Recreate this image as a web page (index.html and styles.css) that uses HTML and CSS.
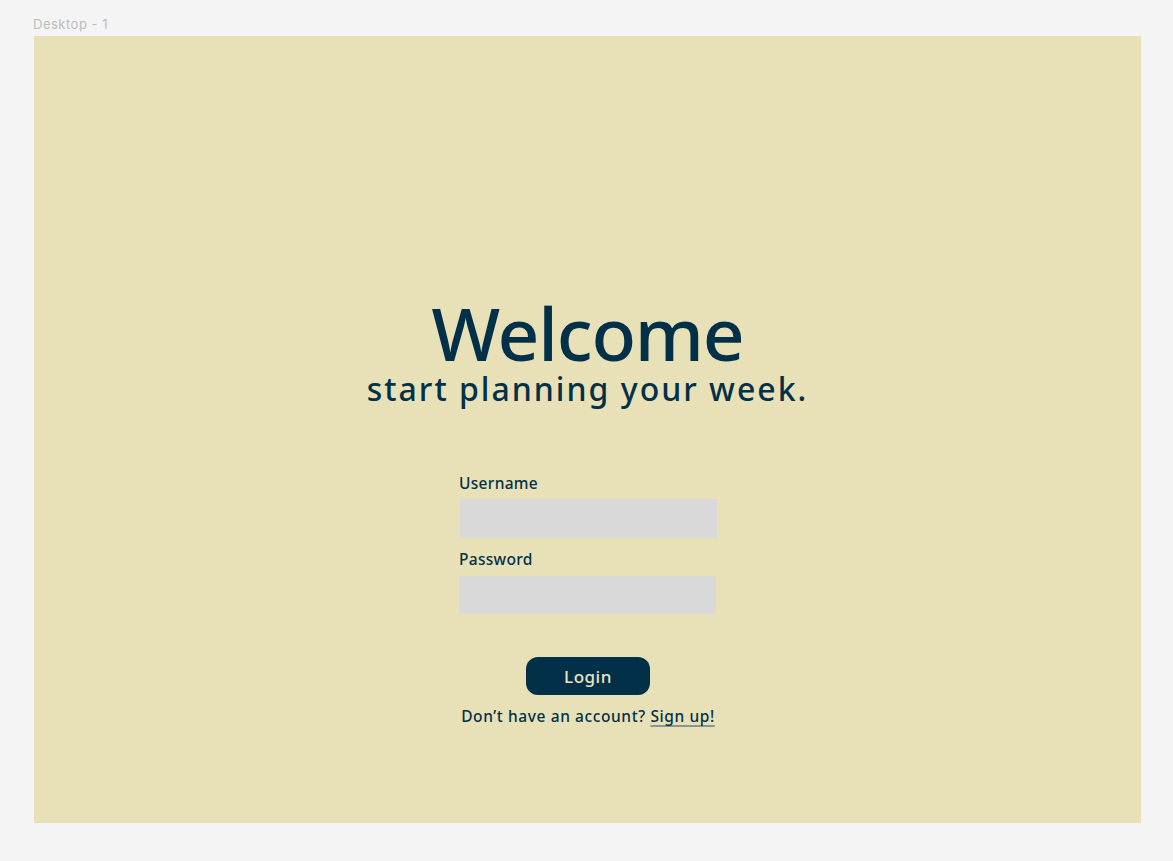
FILE: index.html
```html
<!DOCTYPE html>
<html>
<head>
<meta charset="utf-8">
<link rel="stylesheet" href="styles.css">
</head>
<body>
<div class="canvas">
  <div class="frame-label">Desktop - 1</div>
  <main class="frame">
    <div class="hero">
      <h1 class="title">Welcome</h1>
      <p class="subtitle">start planning your week.</p>
    </div>
    <form class="form">
      <label class="label">Username</label>
      <div class="input"></div>
      <label class="label label-2">Password</label>
      <div class="input input-2"></div>
      <button type="button" class="btn">Login</button>
      <p class="signup">Don’t have an account? <a class="link">Sign up!</a></p>
    </form>
  </main>
</div>
</body>
</html>
```
FILE: styles.css
```css
html, body { margin: 0; padding: 0; }
body {
  background: #f4f4f4;
  font-family: "Noto Sans", "Open Sans", sans-serif;
}
.canvas {
  padding: 15px 32px 38px 34px;
  display: flex;
  flex-direction: column;
}
.frame-label {
  font-family: "Inter", sans-serif;
  font-size: 13px;
  color: #bdbdbd;
  line-height: 18px;
  letter-spacing: 0.5px;
  margin-left: -1px;
  height: 21px;
}
.frame {
  width: 1107px;
  height: 787px;
  background: #e8e1b8;
  display: flex;
  flex-direction: column;
  align-items: center;
  color: #033049;
  box-sizing: border-box;
  padding-top: 258px;
}
.hero {
  display: flex;
  flex-direction: column;
  align-items: center;
}
.title {
  margin: 0;
  font-size: 73px;
  font-weight: 500;
  line-height: 78px;
  letter-spacing: -1.2px;
}
.subtitle {
  margin: 0;
  font-size: 32px;
  font-weight: 500;
  line-height: 34px;
  letter-spacing: 2px;
}
.form {
  margin-top: 67px;
  width: 258px;
  display: flex;
  flex-direction: column;
  margin-left: 1px;
}
.label {
  font-size: 15.5px;
  font-weight: 500;
  line-height: 20px;
  letter-spacing: 0.3px;
}
.label-2 { margin-top: 11px; }
.input {
  height: 39px;
  width: 257px;
  margin-top: 6px;
  margin-left: 1px;
  background: #d9d9d9;
}
.input-2 { margin-left: 0; height: 38px; margin-top: 7px; }
.btn {
  align-self: center;
  margin-top: 43px;
  width: 124px;
  height: 38px;
  border: none;
  border-radius: 12px;
  background: #033049;
  color: #ece5c0;
  font-family: inherit;
  font-size: 17px;
  font-weight: 500;
  letter-spacing: 0.5px;
  padding: 0;
}
.signup {
  margin: 11px 0 0;
  font-size: 15.5px;
  font-weight: 500;
  line-height: 20px;
  letter-spacing: 0.6px;
  white-space: nowrap;
  text-align: center;
}
.link {
  text-decoration: underline;
  text-decoration-color: #8a9690;
  text-decoration-thickness: 2px;
  text-decoration-skip-ink: none;
  text-underline-offset: 3px;
}
```
